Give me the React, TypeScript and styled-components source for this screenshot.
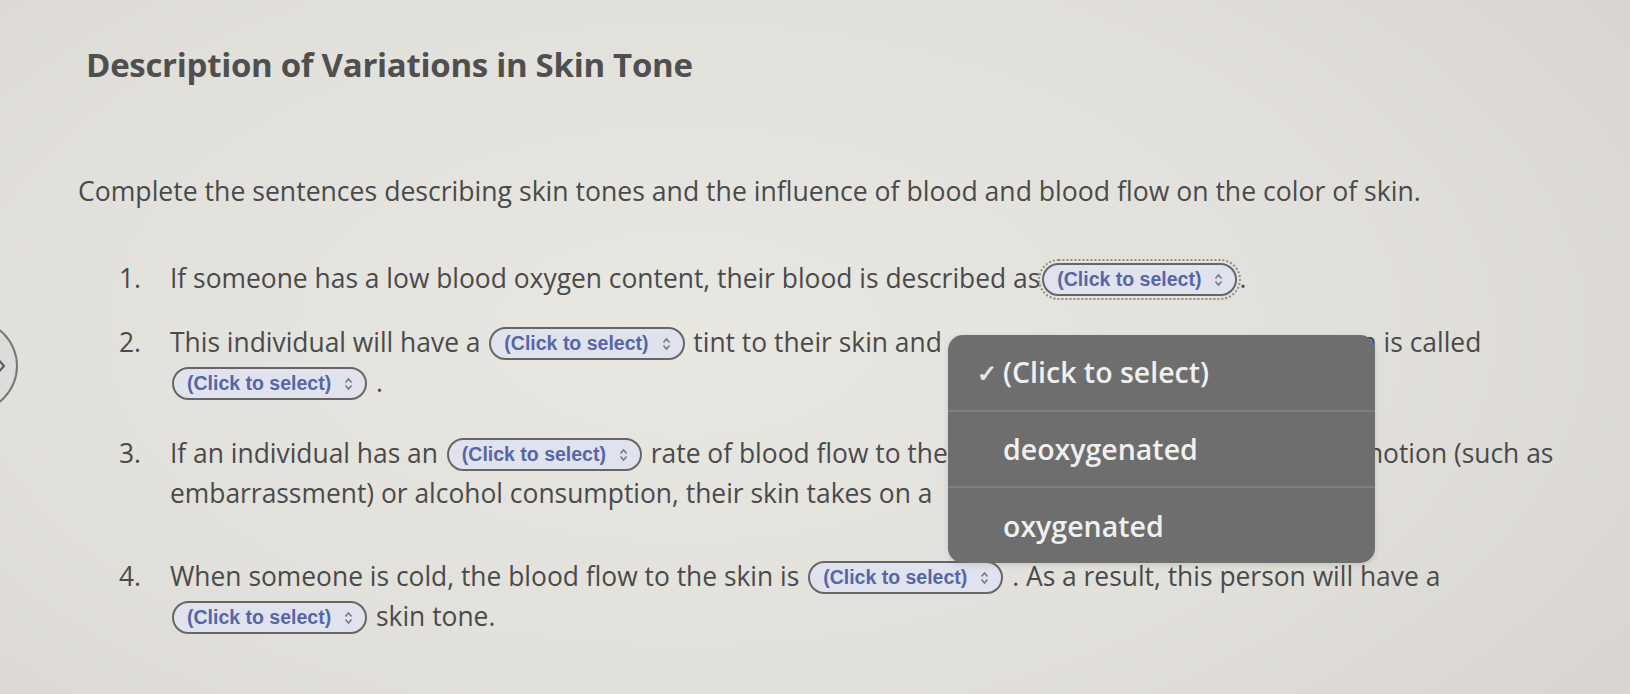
import React from "react";
import styled, { createGlobalStyle } from "styled-components";

const Global = createGlobalStyle`
  html, body { margin: 0; padding: 0; }
  body {
    width: 1630px; height: 694px; overflow: hidden;
    font-family: "Open Sans", "Liberation Sans", sans-serif;
    background: radial-gradient(ellipse 75% 95% at 42% 48%, #e8e7e2 0%, #e2e0db 55%, #d7d4cf 100%);
  }
`;

const Page = styled.div`
  position: relative;
  width: 1630px;
  height: 694px;
  padding: 45px 0 0 78px;
  box-sizing: border-box;
  color: #4a4a4a;
`;

const Title = styled.h1`
  margin: 0 0 0 8px;
  font-family: "Open Sans", "Liberation Sans", sans-serif;
  font-weight: 700;
  font-size: 33px;
  line-height: 40px;
  color: #4f4f4f;
  letter-spacing: -0.3px;
`;

const Intro = styled.p`
  margin: 86px 0 0 0;
  font-size: 26.6px;
  line-height: 40px;
`;

const List = styled.ol`
  list-style: none;
  margin: 47px 0 0 41px;
  padding: 0;
  display: flex;
  flex-direction: column;
  width: 1500px;
`;

const Item = styled.li<{ $gap?: number }>`
  display: grid;
  grid-template-columns: 51px 1fr;
  font-size: 26.4px;
  line-height: 40px;
  margin-top: ${(p) => p.$gap ?? 0}px;
`;

const Num = styled.span``;

const Text = styled.span`
  white-space: nowrap;
`;

const Pill = styled.span<{ $focus?: boolean; $push?: boolean }>`
  display: inline-flex;
  align-items: center;
  gap: 12px;
  height: 29px;
  padding: 0 11px 0 13px;
  margin: 0 2px 0 ${(p) => (p.$push ? "24px" : "2px")};
  border: 2px solid #666;
  border-radius: 17px;
  background: #e0e3ed;
  color: #5666a6;
  font-family: "Liberation Sans", Arial, sans-serif;
  font-weight: 700;
  font-size: 19.5px;
  vertical-align: 2px;
  line-height: 1;
  outline: ${(p) => (p.$focus ? "2px dotted #8d8d8d" : "none")};
  outline-offset: 2px;
`;

const Arrows = styled.svg`
  width: 11px;
  height: 16px;
`;

const Menu = styled.div`
  position: absolute;
  left: 948px;
  top: 335px;
  width: 427px;
  height: 228px;
  background: #6e6e6e;
  border-radius: 15px;
  box-shadow: 0 2px 6px rgba(0, 0, 0, 0.12);
  display: flex;
  flex-direction: column;
  overflow: hidden;
`;

const Option = styled.div<{ $last?: boolean }>`
  flex: 1;
  display: flex;
  align-items: center;
  padding-left: 55px;
  position: relative;
  color: #f0f0f0;
  font-family: "Open Sans", "Liberation Sans", sans-serif;
  font-weight: 600;
  font-size: 28.5px;
  border-bottom: ${(p) => (p.$last ? "none" : "2px solid #7f7f7f")};
`;

const Check = styled.span`
  position: absolute;
  left: 29px;
  font-size: 24px;
  color: #e6e6e6;
`;

const SideButton = styled.div`
  position: absolute;
  left: -72px;
  top: 320px;
  width: 90px;
  height: 92px;
  border-radius: 50%;
  border: 2px solid #777;
  background: #dcdcda;
  display: flex;
  align-items: center;
  justify-content: flex-end;
  padding-right: 10px;
  box-sizing: border-box;
`;

const Chevron = styled.svg`
  width: 10px;
  height: 22px;
`;

/* words that sit under the open dropdown in the screenshot */
const Hidden = styled.span`
  color: transparent;
`;

const Select = ({ focus, push }: { focus?: boolean; push?: boolean }) => (
  <Pill $focus={focus} $push={push}>
    (Click to select)
    <Arrows viewBox="0 0 11 16">
      <path d="M2.5 6.5 L5.5 3 L8.5 6.5 M2.5 9.5 L5.5 13 L8.5 9.5" fill="none" stroke="#777" strokeWidth="1.5" />
    </Arrows>
  </Pill>
);

export default function App() {
  return (
    <>
      <Global />
      <Page>
        <SideButton>
          <Chevron viewBox="0 0 10 22">
            <path d="M1 3 L8 11 L1 19" fill="none" stroke="#555" strokeWidth="2" />
          </Chevron>
        </SideButton>
        <Title>Description of Variations in Skin Tone</Title>
        <Intro>
          Complete the sentences describing skin tones and the influence of blood and blood flow on the color of skin.
        </Intro>
        <List>
          <Item>
            <Num>1.</Num>
            <Text>
              If someone has a low blood oxygen content, their blood is described as
              <Select focus />.
            </Text>
          </Item>
          <Item $gap={24}>
            <Num>2.</Num>
            <Text>
              This individual will have a <Select /> tint to their skin and{" "}
              <Hidden>this bluish discoloration of the ski</Hidden>n is called
              <br />
              <Select /> .
            </Text>
          </Item>
          <Item $gap={31}>
            <Num>3.</Num>
            <Text>
              If an individual has an <Select /> rate of blood flow to the
              <Hidden> skin because of a really intense e</Hidden>motion (such as
              <br />
              embarrassment) or alcohol consumption, their skin takes on a<Select push /> hue.
            </Text>
          </Item>
          <Item $gap={43}>
            <Num>4.</Num>
            <Text>
              When someone is cold, the blood flow to the skin is <Select /> . As a result, this person will have a
              <br />
              <Select /> skin tone.
            </Text>
          </Item>
        </List>
        <Menu>
          <Option>
            <Check>✓</Check>(Click to select)
          </Option>
          <Option>deoxygenated</Option>
          <Option $last>oxygenated</Option>
        </Menu>
      </Page>
    </>
  );
}
